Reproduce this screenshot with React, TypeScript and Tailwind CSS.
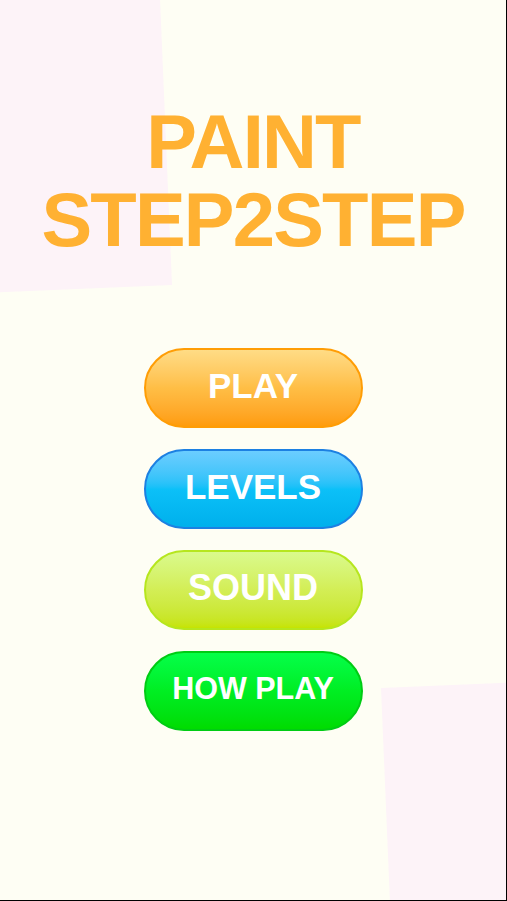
import React from 'react';

const buttons = [
    { label: 'PLAY', cls: 'bg-gradient-to-b from-[#ffdc85] via-[#ffbe45] to-[#ff9c0a] border-[#ff9d05] text-[35px]' },
    { label: 'LEVELS', cls: 'bg-gradient-to-b from-[#6bcdff] via-[#0cc0f8] to-[#00b0ec] border-[#1c80e2] text-[35px]' },
    { label: 'SOUND', cls: 'bg-gradient-to-b from-[#dafa8c] via-[#d3ee55] to-[#c6e400] border-[#b6e61e] text-[36px]' },
    { label: 'HOW PLAY', cls: 'bg-gradient-to-b from-[#05ff48] via-[#00ee22] to-[#00dc00] border-[#00cc14] text-[30.5px]' },
];

const App: React.FC = () => {
    return (
        <div className="relative w-[507px] h-[901px] overflow-hidden bg-[#fefef4] border-r border-b border-black" style={{ fontFamily: '"Liberation Sans", Arial, sans-serif' }}>
            {/* decorative pink sheets */}
            <div className="absolute left-[-228px] top-[-315px] w-[400px] h-[600px] bg-[#fdf3f8] origin-bottom-right -rotate-[2.4deg]" />
            <div className="absolute left-[381px] top-[688px] w-[300px] h-[400px] bg-[#fdf3f8] origin-top-left -rotate-[2.4deg]" />

            <div className="relative flex flex-col items-center pt-[103px]">
                <h1 className="text-[76px] leading-[78px] font-bold tracking-[-1.8px] text-[#ffb132] text-center">
                    PAINT<br />STEP2STEP
                </h1>
                <div className="flex flex-col gap-[21px] mt-[89px]">
                    {buttons.map((b) => (
                        <button
                            key={b.label}
                            className={`w-[219px] h-[80px] rounded-full border-2 flex items-center justify-center font-bold text-white pb-[4px] ${b.cls}`}
                        >
                            {b.label}
                        </button>
                    ))}
                </div>
            </div>
        </div>
    );
};

export default App;
